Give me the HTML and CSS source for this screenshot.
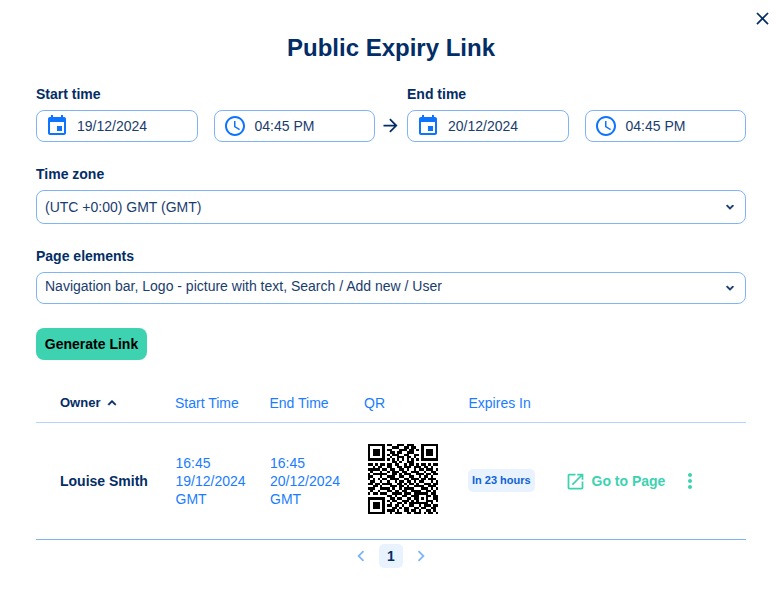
FILE: index.html
```html
<!DOCTYPE html>
<html lang="en">
<head>
  <meta charset="UTF-8">
  <title>Public Expiry Link</title>
  <link rel="stylesheet" href="styles.css">
</head>
<body>
  <div class="modal">
    <button class="close">
      <svg viewBox="0 0 24 24"><path d="M19 6.41L17.59 5 12 10.59 6.41 5 5 6.41 10.59 12 5 17.59 6.41 19 12 13.41 17.59 19 19 17.59 13.41 12z"/></svg>
    </button>
    <h1>Public Expiry Link</h1>

    <div class="range">
      <div class="range-group">
        <label>Start time</label>
        <div class="range-fields">
          <div class="field">
            <svg class="field-icon" viewBox="0 0 24 24"><path d="M17 12h-5v5h5v-5zM16 1v2H8V1H6v2H5c-1.11 0-1.99.9-1.99 2L3 19c0 1.1.89 2 2 2h14c1.1 0 2-.9 2-2V5c0-1.1-.9-2-2-2h-1V1h-2zm3 18H5V8h14v11z"/></svg>
            <span>19/12/2024</span>
          </div>
          <div class="field">
            <svg class="field-icon" viewBox="0 0 24 24"><path d="M11.99 2C6.47 2 2 6.48 2 12s4.47 10 9.99 10C17.52 22 22 17.52 22 12S17.52 2 11.99 2zM12 20c-4.42 0-8-3.58-8-8s3.58-8 8-8 8 3.58 8 8-3.58 8-8 8zm.5-13H11v6l5.25 3.15.75-1.23-4.5-2.67z"/></svg>
            <span>04:45 PM</span>
          </div>
        </div>
      </div>
      <svg class="arrow" viewBox="0 0 24 24"><path d="M12 4l-1.41 1.41L16.17 11H4v2h12.17l-5.58 5.59L12 20l8-8z"/></svg>
      <div class="range-group">
        <label>End time</label>
        <div class="range-fields">
          <div class="field">
            <svg class="field-icon" viewBox="0 0 24 24"><path d="M17 12h-5v5h5v-5zM16 1v2H8V1H6v2H5c-1.11 0-1.99.9-1.99 2L3 19c0 1.1.89 2 2 2h14c1.1 0 2-.9 2-2V5c0-1.1-.9-2-2-2h-1V1h-2zm3 18H5V8h14v11z"/></svg>
            <span>20/12/2024</span>
          </div>
          <div class="field">
            <svg class="field-icon" viewBox="0 0 24 24"><path d="M11.99 2C6.47 2 2 6.48 2 12s4.47 10 9.99 10C17.52 22 22 17.52 22 12S17.52 2 11.99 2zM12 20c-4.42 0-8-3.58-8-8s3.58-8 8-8 8 3.58 8 8-3.58 8-8 8zm.5-13H11v6l5.25 3.15.75-1.23-4.5-2.67z"/></svg>
            <span>04:45 PM</span>
          </div>
        </div>
      </div>
    </div>

    <label>Time zone</label>
    <div class="select select-tall">
      <span>(UTC +0:00) GMT (GMT)</span>
      <svg class="select-chevron" viewBox="0 0 24 24"><path d="M7.41 8.59L12 13.17l4.59-4.58L18 10l-6 6-6-6 1.41-1.41z"/></svg>
    </div>

    <label>Page elements</label>
    <div class="select">
      <span class="select-raised">Navigation bar, Logo - picture with text, Search / Add new / User</span>
      <svg class="select-chevron" viewBox="0 0 24 24"><path d="M7.41 8.59L12 13.17l4.59-4.58L18 10l-6 6-6-6 1.41-1.41z"/></svg>
    </div>

    <button class="generate">Generate Link</button>

    <div class="table">
      <div class="table-row table-head">
        <div class="owner-head">Owner
          <svg viewBox="0 0 24 24"><path d="M7.41 15.41L12 10.83l4.59 4.58L18 14l-6-6-6 6z"/></svg>
        </div>
        <div>Start Time</div>
        <div>End Time</div>
        <div>QR</div>
        <div>Expires In</div>
      </div>
      <div class="table-row table-body">
        <div class="owner">Louise Smith</div>
        <div class="when">16:45<br>19/12/2024<br>GMT</div>
        <div class="when">16:45<br>20/12/2024<br>GMT</div>
        <div><svg id="qr" class="qr" viewBox="0 0 29 29" shape-rendering="crispEdges"></svg></div>
        <div><span class="badge">In 23 hours</span></div>
        <div class="actions">
          <a class="go-link">
            <svg viewBox="0 0 24 24"><path d="M19 19H5V5h7V3H5c-1.11 0-2 .9-2 2v14c0 1.1.89 2 2 2h14c1.1 0 2-.9 2-2v-7h-2v7zM14 3v2h3.59l-9.83 9.83 1.41 1.41L19 6.41V10h2V3h-7z"/></svg>
            Go to Page
          </a>
          <svg class="more" viewBox="0 0 24 24"><path d="M12 8c1.1 0 2-.9 2-2s-.9-2-2-2-2 .9-2 2 .9 2 2 2zm0 2c-1.1 0-2 .9-2 2s.9 2 2 2 2-.9 2-2-.9-2-2-2zm0 6c-1.1 0-2 .9-2 2s.9 2 2 2 2-.9 2-2-.9-2-2-2z"/></svg>
        </div>
      </div>
    </div>

    <div class="pager">
      <svg viewBox="0 0 24 24"><path d="M15.41 7.41L14 6l-6 6 6 6 1.41-1.41L10.83 12z"/></svg>
      <span class="page-current">1</span>
      <svg viewBox="0 0 24 24"><path d="M10 6L8.59 7.41 13.17 12l-4.58 4.59L10 18l6-6z"/></svg>
    </div>
  </div>
  <script src="qr.js"></script>
</body>
</html>
```

FILE: styles.css
```css
body {
  margin: 0;
  font-family: "Liberation Sans", Arial, sans-serif;
  font-size: 14px;
  background-color: #fff;
  color: #1a3c6e;
}
.modal {
  position: relative;
  padding: 33px 34px 0 36px;
}
.close {
  position: absolute;
  top: 8px;
  right: 7.5px;
  width: 21px;
  height: 21px;
  padding: 0;
  border: none;
  background: none;
}
.close svg {
  display: block;
  fill: #032d66;
}
h1 {
  margin: 0 0 21px;
  height: 30px;
  font-size: 24px;
  line-height: 30px;
  text-align: center;
  color: #032d66;
}
label {
  display: block;
  height: 20px;
  margin-bottom: 6px;
  font-size: 14px;
  font-weight: bold;
  line-height: 20px;
  color: #032d66;
}
.range {
  display: flex;
  align-items: flex-end;
  margin-bottom: 22px;
}
.range-group {
  flex: 1;
}
.range-fields {
  display: flex;
  gap: 16px;
}
.arrow {
  width: 21px;
  height: 21px;
  margin: 0 6px 6px 5px;
  fill: #032d66;
}
.field {
  flex: 1;
  display: flex;
  align-items: center;
  gap: 8px;
  box-sizing: border-box;
  height: 32px;
  padding-left: 8px;
  border: 1px solid #7fb5f5;
  border-radius: 8px;
}
.field-icon {
  width: 24px;
  height: 24px;
  fill: #0d74ff;
}
.select {
  display: flex;
  align-items: center;
  justify-content: space-between;
  box-sizing: border-box;
  height: 32px;
  margin-bottom: 22px;
  padding: 0 8px;
  border: 1px solid #7fb5f5;
  border-radius: 8px;
}
.select-tall {
  height: 34px;
}
.select-raised {
  padding-bottom: 4px;
}
.select-chevron {
  width: 14px;
  height: 14px;
  fill: #032d66;
  stroke: #032d66;
  stroke-width: 1.5;
}
.generate {
  display: block;
  width: 111px;
  height: 32px;
  margin: 24px 0 23px;
  padding: 0;
  border: none;
  border-radius: 8px;
  background-color: #3dd2b0;
  font-family: inherit;
  font-size: 14px;
  font-weight: bold;
  color: #000;
}
.table-row {
  display: grid;
  grid-template-columns: 139px 94.5px 94.5px 104.5px 98px 1fr;
  align-items: center;
}
.table-head {
  height: 39px;
  border-bottom: 1px solid #b3d4ff;
  color: #1a7cff;
}
.owner-head {
  display: flex;
  align-items: center;
  gap: 4px;
  padding-left: 24px;
  font-size: 13px;
  font-weight: bold;
  color: #032d66;
}
.owner-head svg {
  width: 16px;
  height: 16px;
  fill: #032d66;
  stroke: #032d66;
  stroke-width: 1;
}
.table-body {
  height: 116px;
  border-bottom: 1px solid #7fb5f5;
}
.owner {
  padding-left: 24px;
  font-weight: bold;
  color: #032d66;
}
.when {
  padding-left: 0.5px;
  line-height: 18px;
  color: #1a7cff;
}
.qr {
  display: block;
  width: 70px;
  height: 70px;
  margin: 0 0 5px 4px;
}
.badge {
  display: inline-block;
  height: 23px;
  margin: 0 0 2px -1px;
  padding: 0 4.5px;
  border-radius: 5px;
  background-color: #e9f2ff;
  font-size: 11px;
  font-weight: bold;
  line-height: 23px;
  color: #0f62d6;
}
.actions {
  display: flex;
  align-items: center;
  margin-left: -2px;
}
.go-link {
  display: flex;
  align-items: center;
  gap: 6px;
  font-weight: bold;
  color: #3dd2b0;
}
.go-link svg {
  width: 21px;
  height: 21px;
  fill: #3dd2b0;
}
.more {
  width: 24px;
  height: 24px;
  margin-left: 13px;
  fill: #3dd2b0;
}
.pager {
  display: flex;
  align-items: center;
  justify-content: center;
  gap: 7px;
  padding-top: 4px;
}
.pager svg {
  width: 22px;
  height: 22px;
  fill: #7fb5f5;
}
.page-current {
  width: 24px;
  height: 24px;
  border-radius: 5px;
  background-color: #e9f2ff;
  font-weight: bold;
  line-height: 24px;
  text-align: center;
  color: #032d66;
}
```

FILE: qr.js
```js
// QR modules, one string per row
const rows = [
  "11111110110011101110001111111",
  "10000010001110011011001000001",
  "10111010110001110110101011101",
  "10111010011011001110001011101",
  "10111010101110011001101011101",
  "10000010010011101101001000001",
  "11111110101010101010101111111",
  "00000000001101001110000000000",
  "11010110110110010110101101011",
  "00101100110011011101110110100",
  "11111011011001101001011011101",
  "01000100101110110011100100110",
  "10111111001101011100111011011",
  "11000100111001100110010110100",
  "10101011011110011011101101110",
  "01100100100101101101011000101",
  "11011011110011010110100111011",
  "00110100011101101001111001110",
  "11100111101001011110001110101",
  "01001000110110110011110011010",
  "10110111001111011101111110110",
  "00000000110100110011100011011",
  "11111110011011001101101010011",
  "10000010101100111010100011101",
  "10111010010011010111111110100",
  "10111010110110100110010111011",
  "10111010001101011001101100110",
  "10000010111010011011010011010",
  "11111110010111001101110101101"
];

let d = "";
rows.forEach((row, y) => {
  row.split("").forEach((cell, x) => {
    if (cell === "1") d += "M" + x + " " + y + "h1v1h-1z";
  });
});
const path = document.createElementNS("http://www.w3.org/2000/svg", "path");
path.setAttribute("d", d);
document.getElementById("qr").appendChild(path);
```
